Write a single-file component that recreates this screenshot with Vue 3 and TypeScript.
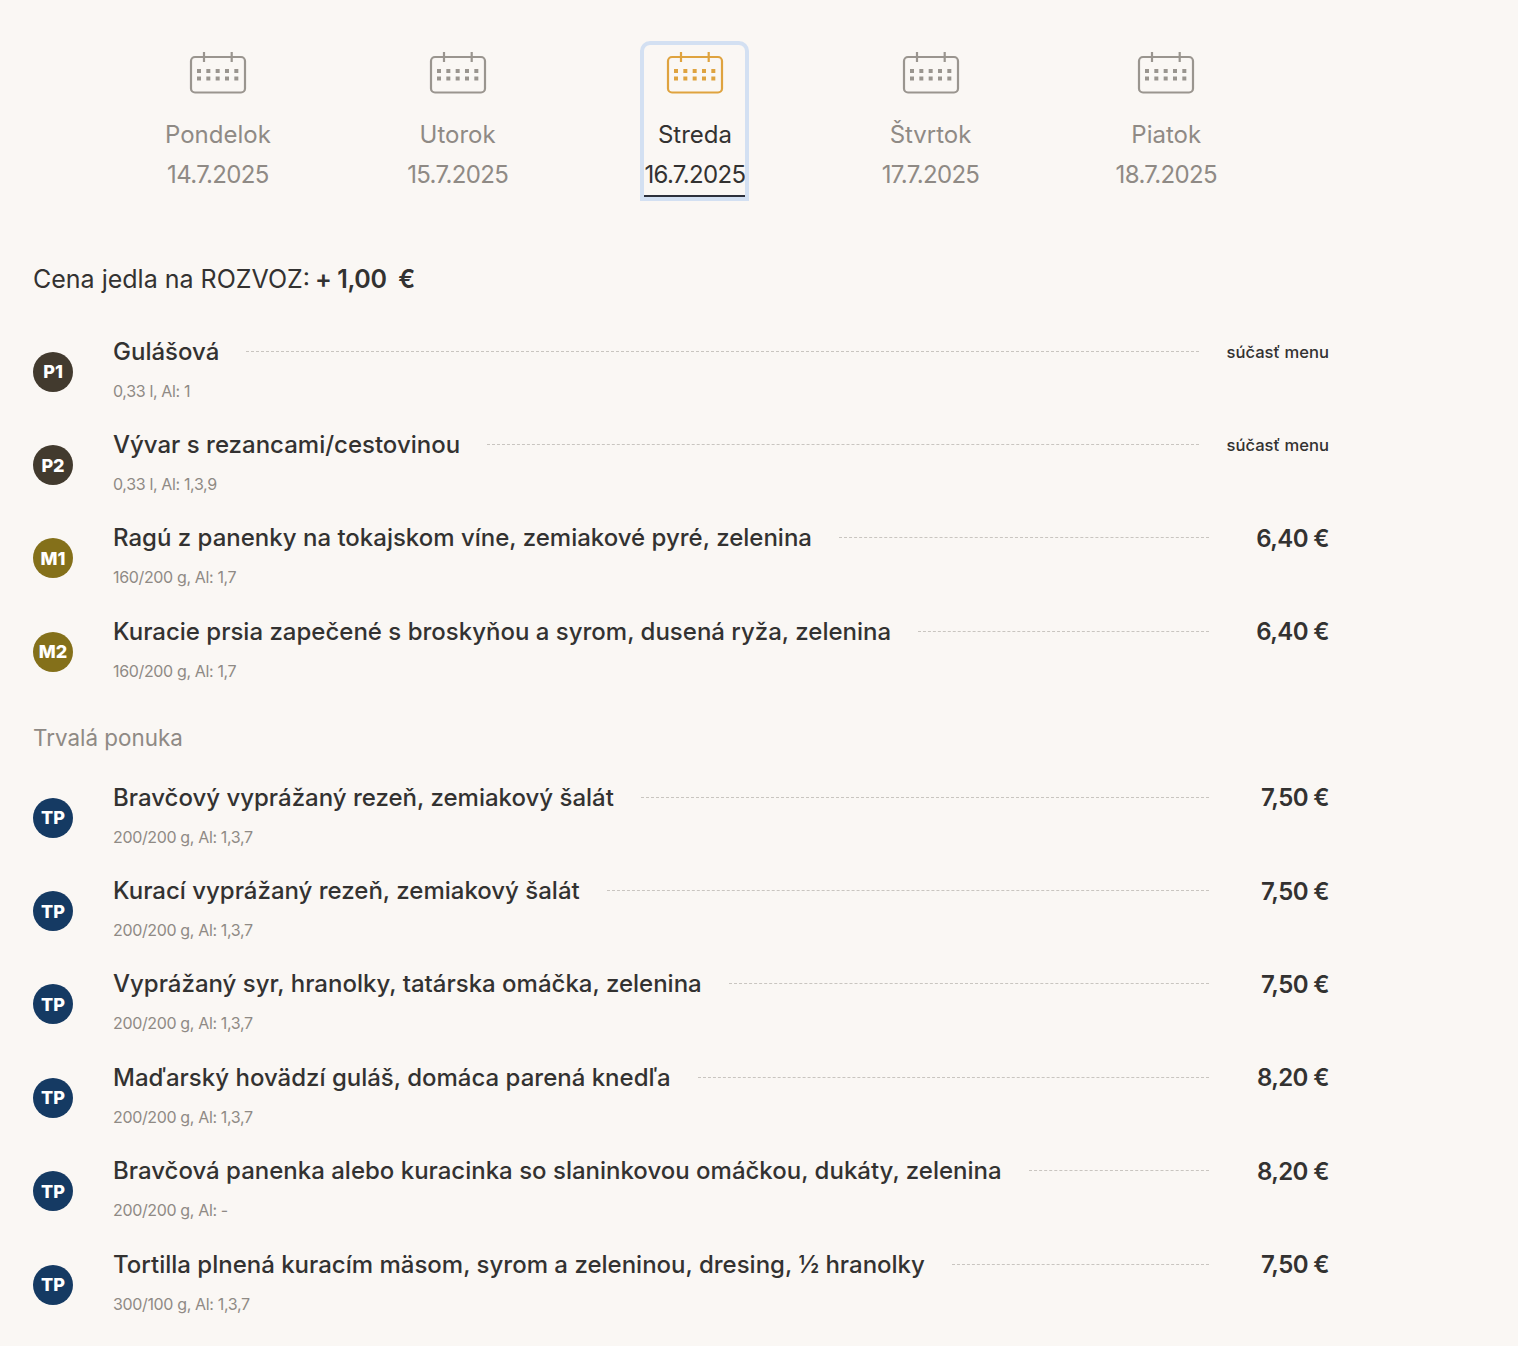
<script setup lang="ts">
interface Day { name: string; date: string; active?: boolean }
interface Dish { badge: string; tone: string; title: string; sub: string; price: string; included?: boolean }

const days: Day[] = [
  { name: 'Pondelok', date: '14.7.2025' },
  { name: 'Utorok', date: '15.7.2025' },
  { name: 'Streda', date: '16.7.2025', active: true },
  { name: 'Štvrtok', date: '17.7.2025' },
  { name: 'Piatok', date: '18.7.2025' },
]
const dots = [0, 1, 2, 3, 4]
const daily: Dish[] = [
  { badge: 'P1', tone: 'soup', title: 'Gulášová', sub: '0,33 l, Al: 1', price: 'súčasť menu', included: true },
  { badge: 'P2', tone: 'soup', title: 'Vývar s rezancami/cestovinou', sub: '0,33 l, Al: 1,3,9', price: 'súčasť menu', included: true },
  { badge: 'M1', tone: 'main', title: 'Ragú z panenky na tokajskom víne, zemiakové pyré, zelenina', sub: '160/200 g, Al: 1,7', price: '6,40 €' },
  { badge: 'M2', tone: 'main', title: 'Kuracie prsia zapečené s broskyňou a syrom, dusená ryža, zelenina', sub: '160/200 g, Al: 1,7', price: '6,40 €' },
]
const permanent: Dish[] = [
  { badge: 'TP', tone: 'perm', title: 'Bravčový vyprážaný rezeň, zemiakový šalát', sub: '200/200 g, Al: 1,3,7', price: '7,50 €' },
  { badge: 'TP', tone: 'perm', title: 'Kurací vyprážaný rezeň, zemiakový šalát', sub: '200/200 g, Al: 1,3,7', price: '7,50 €' },
  { badge: 'TP', tone: 'perm', title: 'Vyprážaný syr, hranolky, tatárska omáčka, zelenina', sub: '200/200 g, Al: 1,3,7', price: '7,50 €' },
  { badge: 'TP', tone: 'perm', title: 'Maďarský hovädzí guláš, domáca parená knedľa', sub: '200/200 g, Al: 1,3,7', price: '8,20 €' },
  { badge: 'TP', tone: 'perm', title: 'Bravčová panenka alebo kuracinka so slaninkovou omáčkou, dukáty, zelenina', sub: '200/200 g, Al: -', price: '8,20 €' },
  { badge: 'TP', tone: 'perm', title: 'Tortilla plnená kuracím mäsom, syrom a zeleninou, dresing, ½ hranolky', sub: '300/100 g, Al: 1,3,7', price: '7,50 €' },
]
</script>

<template>
  <main class="page">
    <nav class="days">
      <a v-for="d in days" :key="d.date" class="day" :class="{ active: d.active }">
        <svg class="cal" width="58" height="44" viewBox="0 0 58 44" fill="none" stroke="currentColor" stroke-width="2.2">
          <rect x="2" y="6" width="54" height="35.5" rx="4" />
          <path d="M15 1v10M42.7 1v10" />
          <g v-for="r in [18, 25.5]" :key="r" stroke="none" fill="currentColor">
            <rect v-for="c in dots" :key="c" :x="8 + c * 9.33" :y="r" width="4" height="4" />
          </g>
        </svg>
        <span class="name">{{ d.name }}</span>
        <span class="date">{{ d.date }}</span>
      </a>
    </nav>

    <p class="delivery">Cena jedla na ROZVOZ: <b>+ 1,00 &nbsp;€</b></p>

    <section class="list first">
      <article v-for="item in daily" :key="item.badge" class="row">
        <span class="badge" :class="item.tone">{{ item.badge }}</span>
        <div class="body">
          <div class="head">
            <h3>{{ item.title }}</h3>
            <i class="leader"></i>
            <strong class="price" :class="{ included: item.included }">{{ item.price }}</strong>
          </div>
          <small>{{ item.sub }}</small>
        </div>
      </article>
    </section>

    <h2>Trvalá ponuka</h2>

    <section class="list">
      <article v-for="item in permanent" :key="item.title" class="row">
        <span class="badge" :class="item.tone">{{ item.badge }}</span>
        <div class="body">
          <div class="head">
            <h3>{{ item.title }}</h3>
            <i class="leader"></i>
            <strong class="price">{{ item.price }}</strong>
          </div>
          <small>{{ item.sub }}</small>
        </div>
      </article>
    </section>
  </main>
</template>

<style>
html, body { background: #faf7f4; }
</style>

<style scoped>
.page {
  width: 1296px;
  padding: 0 0 0 33px;
  font-family: Inter, "Liberation Sans", sans-serif;
  color: #333231;
}
.days {
  display: flex;
  gap: 136.3px;
  padding: 45px 0 0 132px;
}
.day {
  display: flex;
  flex-direction: column;
  align-items: center;
  color: #8f8a85;
}
.day.active {
  color: #333231;
  outline: 4px solid #d3e0f2;
  border-radius: 6px 6px 0 0;
}
.cal { margin-top: 6px; color: #9a958f; }
.active .cal { color: #dfa33f; }
.name { font-size: 24px; line-height: 36px; margin-top: 22px; }
.date { font-size: 24px; line-height: 36px; margin-top: 4px; padding-bottom: 4px; letter-spacing: -0.65px; }
.active .date { border-bottom: 2px solid #2c2f3a; padding-bottom: 2px; }
.delivery { margin: 64px 0 0; font-size: 25px; line-height: 36px; }
.delivery b { margin-left: -2px; font-weight: 600; letter-spacing: -0.4px; }
.list { display: flex; flex-direction: column; margin-top: 14.95px; }
.list.first { margin-top: 28px; }
.row { display: flex; align-items: center; height: 93.35px; gap: 40px; }
.badge {
  flex: none;
  width: 40px;
  height: 40px;
  border-radius: 50%;
  display: grid;
  place-items: center;
  color: #fff;
  font-size: 18px;
  font-weight: 800;
}
.soup { background: #423a2e; }
.main { background: #84701a; }
.perm { background: #153a63; }
.body { flex: 1; min-width: 0; padding-bottom: 1px; }
.head { display: flex; align-items: center; height: 24px; }
h3 { margin: 0; font-size: 24px; line-height: 24px; font-weight: 550; white-space: nowrap; }
.leader { flex: 1; margin: 0 0 1px 27px; border-top: 1px dashed #c9c5c0; }
.price { min-width: 93px; margin-left: 27px; font-size: 24px; font-weight: 600; letter-spacing: -0.6px; text-align: right; }
.price.included { font-size: 16.6px; font-weight: 500; letter-spacing: 0; min-width: 103px; }
small { display: block; margin-top: 15px; font-size: 16px; line-height: 24px; letter-spacing: -0.35px; color: #8f8a85; }
h2 { margin: 21.8px 0 0; font-size: 22.4px; font-weight: 400; line-height: 36px; color: #8f8a85; }
</style>
